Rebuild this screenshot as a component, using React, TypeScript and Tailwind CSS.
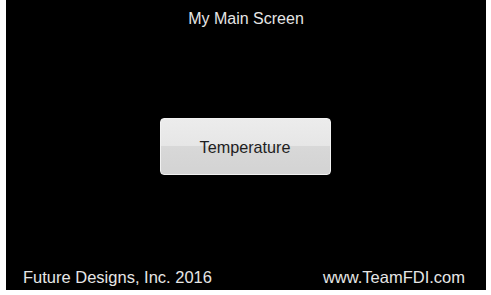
export default function App() {
  return (
    <div className="w-[491px] h-[295px] bg-white" style={{ fontFamily: '"Liberation Sans", Arial, sans-serif' }}>
      <div className="ml-[6px] w-[480px] h-[290px] bg-black flex flex-col">
        {/* Title */}
        <div className="pt-[10px] text-center text-[16px] leading-[18px] text-[#e6e6e6]">My Main Screen</div>

        {/* Centre */}
        <div className="flex-1 flex items-center justify-center">
          <button className="w-[171px] h-[57px] -mt-[3px] -ml-[2px] rounded-[4px] border border-[#f2f2f2] bg-[linear-gradient(to_bottom,#ececec_0%,#e6e6e6_50%,#d8d8d8_50%,#d3d3d3_100%)] text-[16.2px] leading-[18px] text-[#1e1e1e]">
            Temperature
          </button>
        </div>

        {/* Footer */}
        <div className="flex justify-between pl-[17px] pr-[21px] pb-[4px] text-[16.5px] leading-[18px] text-[#e6e6e6]">
          <span>Future Designs, Inc. 2016</span>
          <span>www.TeamFDI.com</span>
        </div>
      </div>
    </div>
  );
}
